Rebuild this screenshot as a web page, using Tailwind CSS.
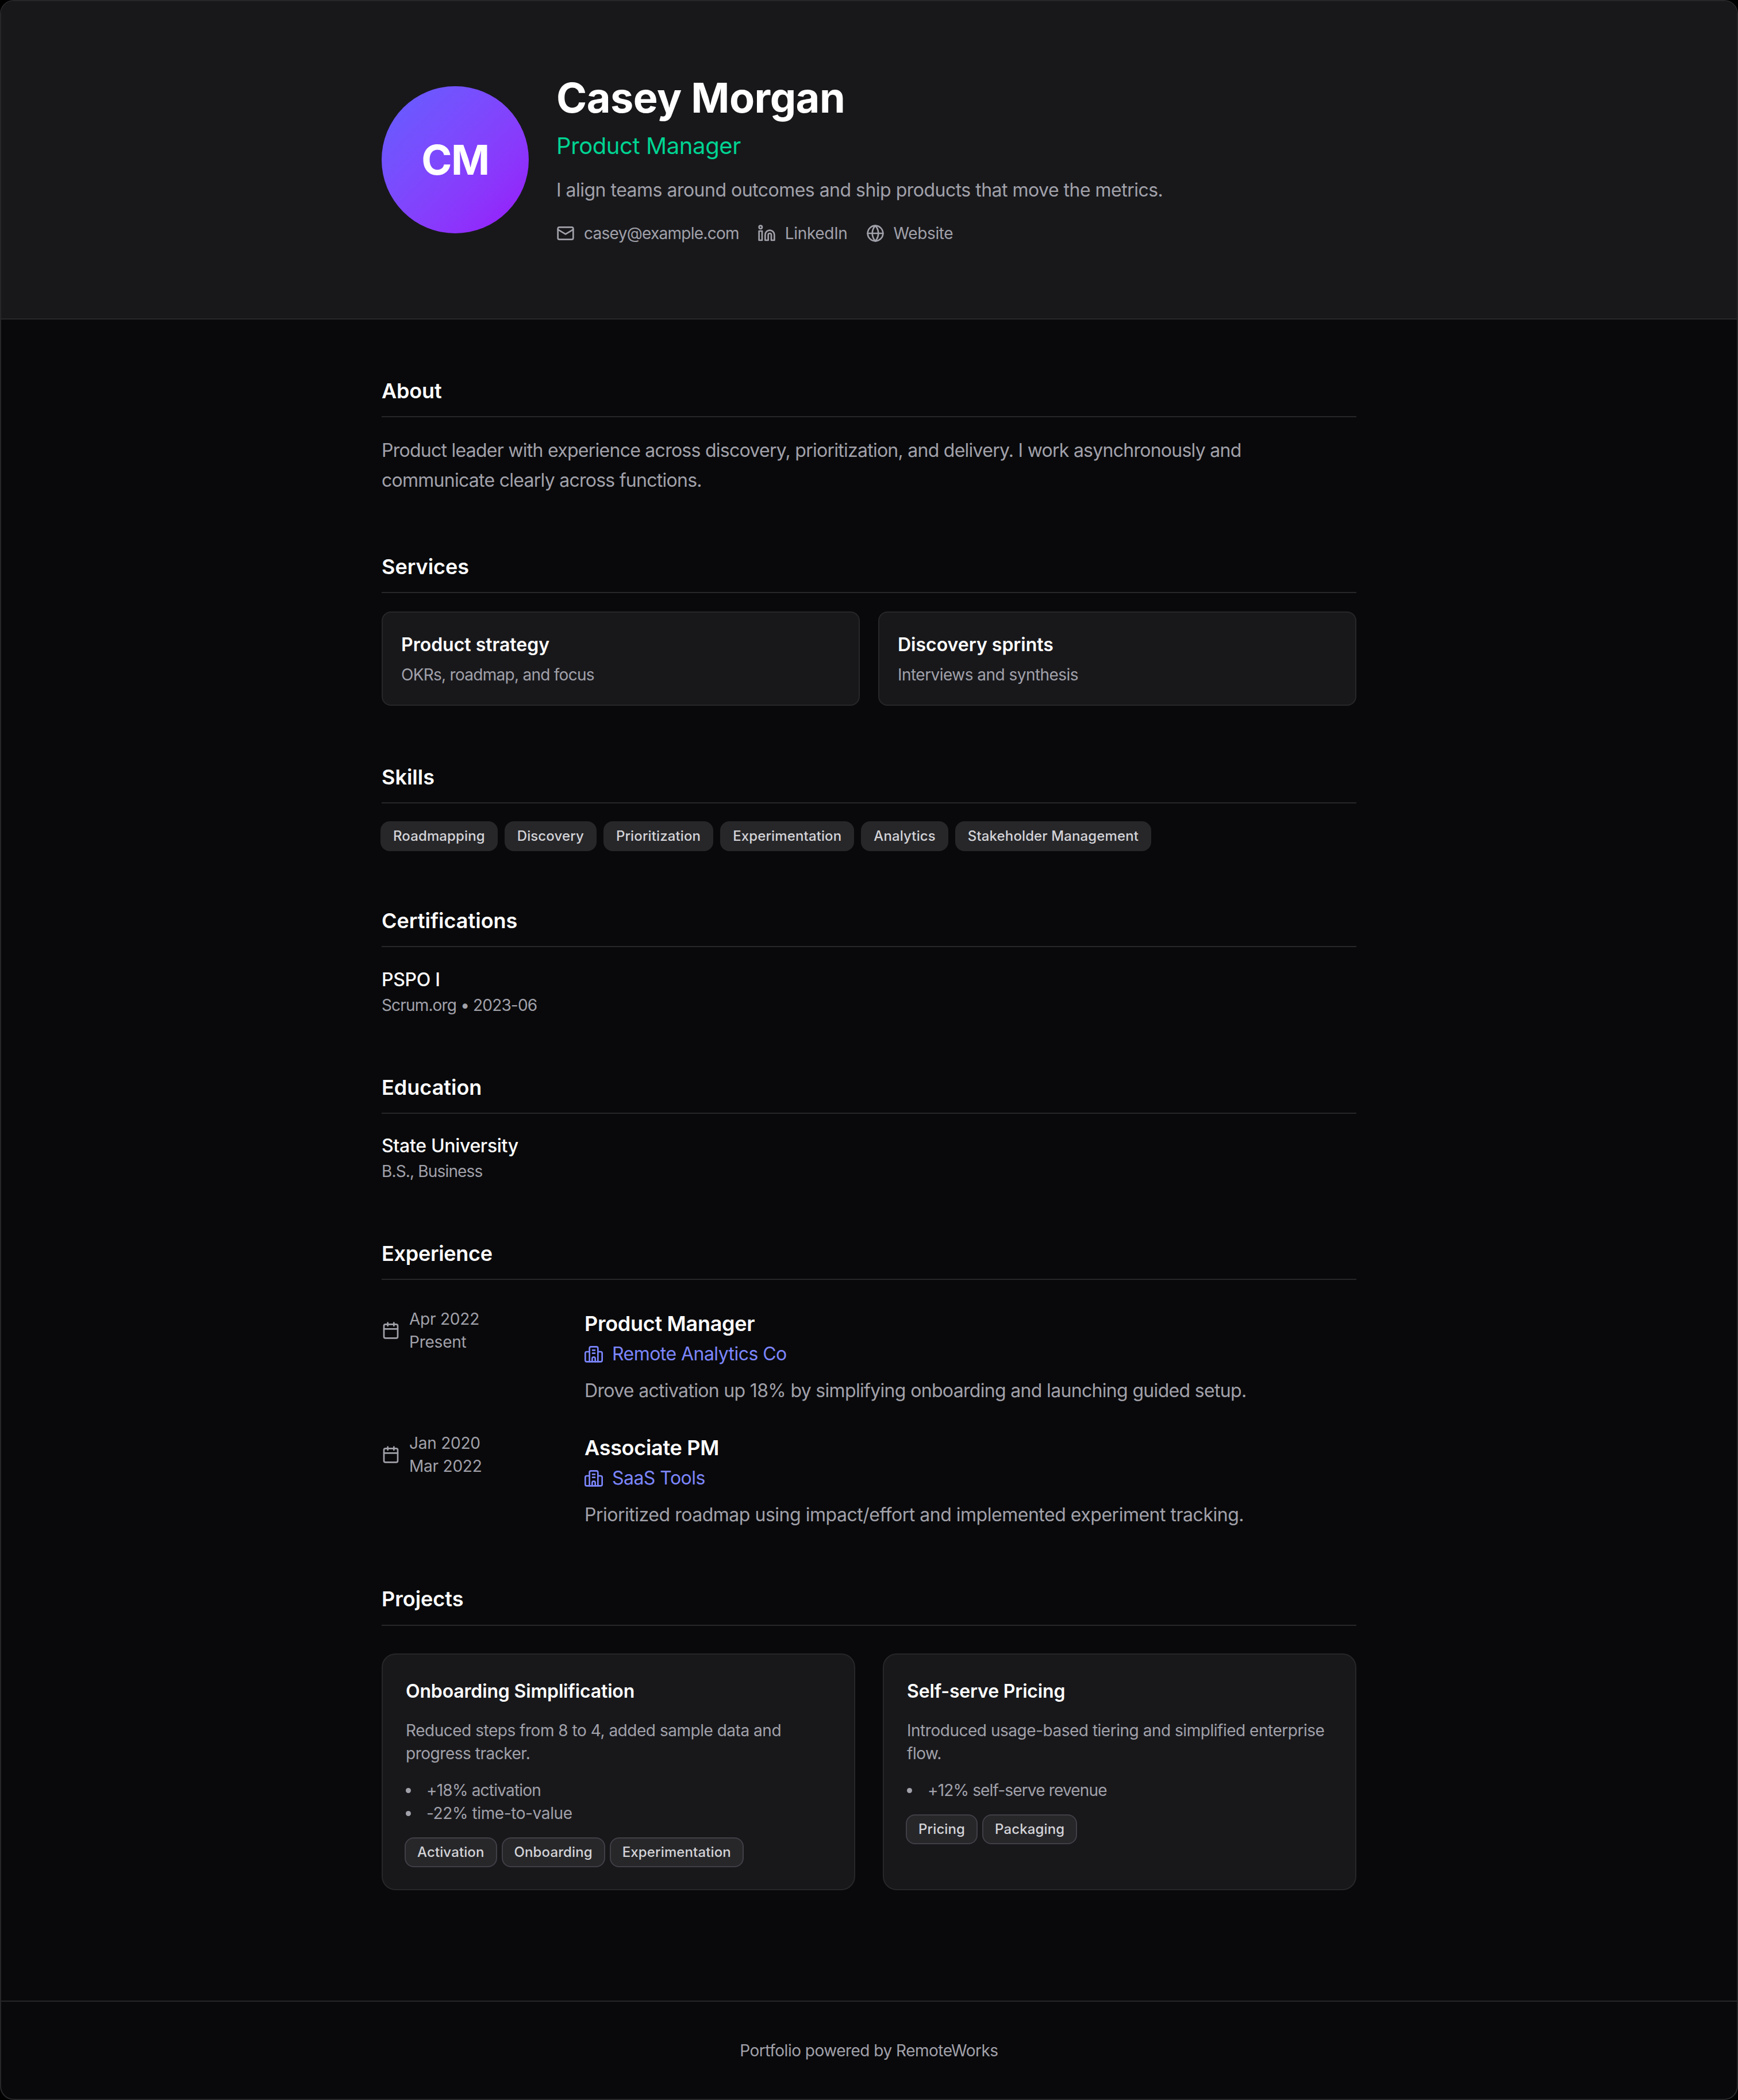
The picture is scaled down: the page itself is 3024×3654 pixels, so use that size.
<!DOCTYPE html>
<html lang="en">
  <head>
    <meta charset="UTF-8" />
    <title>Casey Morgan</title>
    <script src="https://cdn.jsdelivr.net/npm/@tailwindcss/browser@4"></script>
  </head>
  <body class="bg-black font-['Inter',sans-serif]">
    <div class="w-[3024px] h-[3654px] flex flex-col bg-[#09090b] border-2 border-[#27272a] rounded-[24px] overflow-hidden">
      <!-- Header -->
      <header class="h-[554px] shrink-0 bg-[#18181b] border-b-2 border-[#27272a] flex items-center">
        <div class="w-[1696px] ml-[662px] flex items-center gap-[48px]">
          <div class="w-[256px] h-[256px] rounded-full bg-gradient-to-br from-[#615fff] to-[#9810fa] flex items-center justify-center text-white text-[72px] font-bold tracking-[-0.02em]">CM</div>
          <div>
            <h1 class="text-[72px] leading-[80px] font-bold text-white tracking-[-0.007em]">Casey Morgan</h1>
            <p class="mt-[16px] text-[40px] leading-[56px] text-[#00d492] tracking-[-0.01em]">Product Manager</p>
            <p class="mt-[25px] text-[32px] leading-[48px] text-[#a1a1aa] tracking-[-0.016em]">I align teams around outcomes and ship products that move the metrics.</p>
            <div class="mt-[31px] flex gap-[32px] text-[28px] leading-[40px] text-[#a1a1aa]">
              <span class="flex items-center gap-[16px] tracking-[-0.026em]">
                <svg class="w-[32px] h-[32px]" viewBox="0 0 24 24" fill="none" stroke="currentColor" stroke-width="2" stroke-linecap="round" stroke-linejoin="round"><rect x="2" y="4" width="20" height="16" rx="2"/><path d="M22 7l-10 6L2 7"/></svg>
                casey@example.com
              </span>
              <span class="flex items-center gap-[16px] tracking-[-0.012em]">
                <svg class="w-[32px] h-[32px]" viewBox="0 0 24 24" fill="none" stroke="currentColor" stroke-width="2" stroke-linecap="round" stroke-linejoin="round"><path d="M16 8a6 6 0 0 1 6 6v7h-4v-7a2 2 0 0 0-4 0v7h-4v-7a6 6 0 0 1 6-6z"/><rect x="2" y="9" width="4" height="12"/><circle cx="4" cy="4" r="2"/></svg>
                LinkedIn
              </span>
              <span class="flex items-center gap-[16px] tracking-[-0.014em]">
                <svg class="w-[32px] h-[32px]" viewBox="0 0 24 24" fill="none" stroke="currentColor" stroke-width="2" stroke-linecap="round" stroke-linejoin="round"><circle cx="12" cy="12" r="10"/><path d="M2 12h20"/><path d="M12 2a15 15 0 0 1 4 10 15 15 0 0 1-4 10 15 15 0 0 1-4-10 15 15 0 0 1 4-10z"/></svg>
                Website
              </span>
            </div>
          </div>
        </div>
      </header>

      <!-- Main -->
      <main class="flex-1 w-[1696px] ml-[662px] pt-[100px] flex flex-col gap-[100px]">
        <section>
          <h2 class="text-[36px] leading-[48px] font-semibold text-white pb-[20px] border-b-2 border-[#27272a] tracking-[-0.005em]">About</h2>
          <p class="mt-[32px] text-[32px] leading-[52px] text-[#a1a1aa] tracking-[-0.023em]">Product leader with experience across discovery, prioritization, and delivery. I work asynchronously and communicate clearly across functions.</p>
        </section>

        <section>
          <h2 class="text-[36px] leading-[48px] font-semibold text-white pb-[20px] border-b-2 border-[#27272a]">Services</h2>
          <div class="mt-[32px] grid grid-cols-2 gap-[32px]">
            <div class="h-[164px] bg-[#18181b] border-2 border-[#27272a] rounded-[16px] px-[32px] pt-[32px]">
              <h3 class="text-[32px] leading-[48px] font-semibold text-white">Product strategy</h3>
              <p class="text-[28px] leading-[40px] text-[#a1a1aa] mt-[8px] tracking-[-0.026em]">OKRs, roadmap, and focus</p>
            </div>
            <div class="h-[164px] bg-[#18181b] border-2 border-[#27272a] rounded-[16px] px-[32px] pt-[32px]">
              <h3 class="text-[32px] leading-[48px] font-semibold text-white">Discovery sprints</h3>
              <p class="text-[28px] leading-[40px] text-[#a1a1aa] mt-[8px] tracking-[-0.019em]">Interviews and synthesis</p>
            </div>
          </div>
        </section>

        <section>
          <h2 class="text-[36px] leading-[48px] font-semibold text-white pb-[20px] border-b-2 border-[#27272a]">Skills</h2>
          <div class="mt-[31px] -ml-[2px] -mb-[3px] flex gap-[12px] text-[24px] leading-[52px] font-medium text-[#d4d4d8] tracking-[0.005em]">
            <span class="px-[22px] rounded-[16px] bg-[#27272a]">Roadmapping</span>
            <span class="px-[22px] rounded-[16px] bg-[#27272a]">Discovery</span>
            <span class="px-[22px] rounded-[16px] bg-[#27272a]">Prioritization</span>
            <span class="px-[22px] rounded-[16px] bg-[#27272a]">Experimentation</span>
            <span class="px-[22px] rounded-[16px] bg-[#27272a]">Analytics</span>
            <span class="px-[22px] rounded-[16px] bg-[#27272a]">Stakeholder Management</span>
          </div>
        </section>

        <section>
          <h2 class="text-[36px] leading-[48px] font-semibold text-white pb-[20px] border-b-2 border-[#27272a]">Certifications</h2>
          <p class="mt-[33px] text-[32px] leading-[48px] font-medium text-white tracking-[-0.01em]">PSPO I</p>
          <p class="-mb-[1px] text-[28px] leading-[40px] text-[#a1a1aa] tracking-[-0.03em]">Scrum.org • 2023-06</p>
        </section>

        <section>
          <h2 class="text-[36px] leading-[48px] font-semibold text-white pb-[20px] border-b-2 border-[#27272a]">Education</h2>
          <p class="mt-[32px] text-[32px] leading-[48px] font-medium text-white tracking-[-0.01em]">State University</p>
          <p class="-mb-[1px] text-[28px] leading-[40px] text-[#a1a1aa] tracking-[-0.03em]">B.S., Business</p>
        </section>

        <section>
          <h2 class="text-[36px] leading-[48px] font-semibold text-white pb-[20px] border-b-2 border-[#27272a] tracking-[-0.008em]">Experience</h2>
          <div class="mt-[48px] -mb-[4px] flex flex-col gap-[45px]">
            <div class="flex gap-[48px]">
              <div class="w-[305px] shrink-0 flex items-start">
                <div class="flex items-center gap-[16px] text-[28px] leading-[40px] text-[#a1a1aa] tracking-[-0.008em]">
                  <svg class="w-[32px] h-[32px]" viewBox="0 0 24 24" fill="none" stroke="currentColor" stroke-width="2" stroke-linecap="round" stroke-linejoin="round"><rect x="3" y="4" width="18" height="18" rx="2"/><path d="M8 2v4M16 2v4M3 10h18"/></svg>
                  <div>Apr 2022<br />Present</div>
                </div>
              </div>
              <div class="pt-[4px]">
                <h3 class="text-[36px] leading-[48px] font-semibold text-white tracking-[-0.008em]">Product Manager</h3>
                <p class="mt-[5px] flex items-center gap-[16px] text-[32px] leading-[48px] text-[#7c86ff] tracking-[-0.017em]">
                  <svg class="w-[32px] h-[32px]" viewBox="0 0 24 24" fill="none" stroke="currentColor" stroke-width="2" stroke-linecap="round" stroke-linejoin="round"><path d="M6.5 22V4.5a2 2 0 0 1 2-2h7a2 2 0 0 1 2 2V22z"/><path d="M6.5 9H3a2 2 0 0 0-2 2v9a2 2 0 0 0 2 2h3.5"/><path d="M17.5 9H21a2 2 0 0 1 2 2v9a2 2 0 0 1-2 2h-3.5"/><path d="M10.5 7h3M10.5 11h3M10 22v-4a2 2 0 0 1 4 0v4"/></svg>
                  Remote Analytics Co
                </p>
                <p class="mt-[14px] text-[32px] leading-[52px] text-[#a1a1aa] tracking-[-0.021em]">Drove activation up 18% by simplifying onboarding and launching guided setup.</p>
              </div>
            </div>
            <div class="flex gap-[48px]">
              <div class="w-[305px] shrink-0 flex items-start">
                <div class="flex items-center gap-[16px] text-[28px] leading-[40px] text-[#a1a1aa] tracking-[-0.008em]">
                  <svg class="w-[32px] h-[32px]" viewBox="0 0 24 24" fill="none" stroke="currentColor" stroke-width="2" stroke-linecap="round" stroke-linejoin="round"><rect x="3" y="4" width="18" height="18" rx="2"/><path d="M8 2v4M16 2v4M3 10h18"/></svg>
                  <div>Jan 2020<br />Mar 2022</div>
                </div>
              </div>
              <div class="pt-[4px]">
                <h3 class="text-[36px] leading-[48px] font-semibold text-white tracking-[-0.008em]">Associate PM</h3>
                <p class="mt-[5px] flex items-center gap-[16px] text-[32px] leading-[48px] text-[#7c86ff] tracking-[-0.017em]">
                  <svg class="w-[32px] h-[32px]" viewBox="0 0 24 24" fill="none" stroke="currentColor" stroke-width="2" stroke-linecap="round" stroke-linejoin="round"><path d="M6.5 22V4.5a2 2 0 0 1 2-2h7a2 2 0 0 1 2 2V22z"/><path d="M6.5 9H3a2 2 0 0 0-2 2v9a2 2 0 0 0 2 2h3.5"/><path d="M17.5 9H21a2 2 0 0 1 2 2v9a2 2 0 0 1-2 2h-3.5"/><path d="M10.5 7h3M10.5 11h3M10 22v-4a2 2 0 0 1 4 0v4"/></svg>
                  SaaS Tools
                </p>
                <p class="mt-[14px] text-[32px] leading-[52px] text-[#a1a1aa] tracking-[-0.015em]">Prioritized roadmap using impact/effort and implemented experiment tracking.</p>
              </div>
            </div>
          </div>
        </section>

        <section>
          <h2 class="text-[36px] leading-[48px] font-semibold text-white pb-[21px] border-b-2 border-[#27272a]">Projects</h2>
          <div class="mt-[48px] grid grid-cols-2 gap-[48px]">
            <div class="h-[412px] bg-[#18181b] border-2 border-[#27272a] rounded-[24px] p-[40px]">
              <h3 class="text-[32px] leading-[48px] font-semibold text-white tracking-[-0.005em]">Onboarding Simplification</h3>
              <p class="mt-[24px] text-[28px] leading-[40px] text-[#a1a1aa] tracking-[-0.017em]">Reduced steps from 8 to 4, added sample data and progress tracker.</p>
              <ul class="mt-[24px] text-[28px] leading-[40px] text-[#a1a1aa]">
                <li class="flex items-center gap-[27px] tracking-[-0.028em]"><span class="w-[9px] h-[9px] rounded-full bg-[#a1a1aa]"></span>+18% activation</li>
                <li class="flex items-center gap-[27px] tracking-[-0.014em]"><span class="w-[9px] h-[9px] rounded-full bg-[#a1a1aa]"></span>-22% time-to-value</li>
              </ul>
              <div class="mt-[22px] -ml-[2px] flex gap-[8px] text-[24px] leading-[48px] font-medium text-[#d4d4d8] tracking-[0.005em]">
                <span class="px-[20px] rounded-[16px] bg-[#27272a] border-2 border-[#3f3f46]">Activation</span>
                <span class="px-[20px] rounded-[16px] bg-[#27272a] border-2 border-[#3f3f46]">Onboarding</span>
                <span class="px-[20px] rounded-[16px] bg-[#27272a] border-2 border-[#3f3f46]">Experimentation</span>
              </div>
            </div>
            <div class="h-[412px] bg-[#18181b] border-2 border-[#27272a] rounded-[24px] p-[40px]">
              <h3 class="text-[32px] leading-[48px] font-semibold text-white tracking-[-0.005em]">Self-serve Pricing</h3>
              <p class="mt-[24px] text-[28px] leading-[40px] text-[#a1a1aa] tracking-[-0.017em]">Introduced usage-based tiering and simplified enterprise flow.</p>
              <ul class="mt-[24px] text-[28px] leading-[40px] text-[#a1a1aa]">
                <li class="flex items-center gap-[27px] tracking-[-0.03em]"><span class="w-[9px] h-[9px] rounded-full bg-[#a1a1aa]"></span>+12% self-serve revenue</li>
              </ul>
              <div class="mt-[22px] -ml-[2px] flex gap-[8px] text-[24px] leading-[48px] font-medium text-[#d4d4d8] tracking-[0.005em]">
                <span class="px-[20px] rounded-[16px] bg-[#27272a] border-2 border-[#3f3f46]">Pricing</span>
                <span class="px-[20px] rounded-[16px] bg-[#27272a] border-2 border-[#3f3f46]">Packaging</span>
              </div>
            </div>
          </div>
        </section>
      </main>

      <!-- Footer -->
      <footer class="h-[171px] shrink-0 border-t-2 border-[#27272a] flex items-center justify-center text-[28px] text-[#a1a1aa] tracking-[-0.018em]">Portfolio powered by RemoteWorks</footer>
    </div>
  </body>
</html>
